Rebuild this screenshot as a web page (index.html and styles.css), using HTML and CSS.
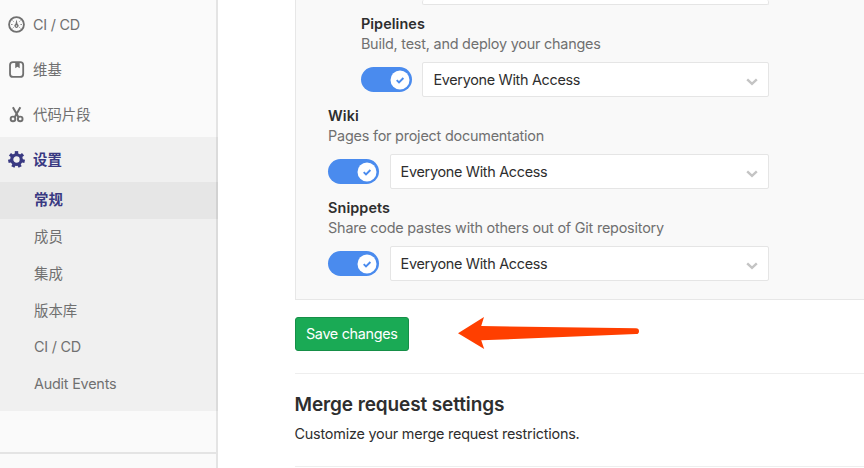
FILE: index.html
```html
<!DOCTYPE html>
<html lang="zh-CN">
<head>
<meta charset="utf-8">
<title>Project settings</title>
<link rel="stylesheet" href="styles.css">
</head>
<body>
<div class="page">
  <nav class="sidebar">
    <a class="nav-item">
      <svg class="nav-icon" viewBox="0 0 16 16"><circle cx="8" cy="8" r="7" fill="none" stroke="currentColor" stroke-width="1.7"/><path d="M8 3.4 L9 7.6 A1.9 1.9 0 1 1 7 7.6Z" fill="currentColor"/><circle cx="8" cy="9.3" r=".7" fill="#fafafa"/><path d="M3 8h1.2M11.8 8H13M4.4 4.4l.8.8M11.6 4.4l-.8.8M4.4 11.6l.8-.8M11.6 11.6l-.8-.8" stroke="currentColor" stroke-width=".9"/></svg>
      <span class="latin">CI / CD</span>
    </a>
    <a class="nav-item">
      <svg class="nav-icon" viewBox="0 0 16 16"><rect x="1.9" y="1" width="12.4" height="14" rx="2.8" fill="none" stroke="currentColor" stroke-width="1.7"/><path d="M6.8 1h4.2v5.8L8.9 5.4 6.8 6.8z" fill="currentColor"/></svg>
      <span>维基</span>
    </a>
    <a class="nav-item">
      <svg class="nav-icon" viewBox="0 0 16 16"><path d="M4.6 1.2 9.9 10.6M11.6 1.2 6.3 10.6" fill="none" stroke="currentColor" stroke-width="1.9"/><circle cx="4.7" cy="12.2" r="2.2" fill="none" stroke="currentColor" stroke-width="1.8"/><circle cx="11.5" cy="12.2" r="2.2" fill="none" stroke="currentColor" stroke-width="1.8"/></svg>
      <span>代码片段</span>
    </a>
    <div class="nav-group">
      <a class="nav-item current">
        <svg class="nav-icon" viewBox="0 0 16 16"><circle cx="8" cy="8" r="4.5" fill="none" stroke="currentColor" stroke-width="3"/><g stroke="currentColor" stroke-width="3.2"><path id="tooth" d="M8 .1v3"/><use href="#tooth" transform="rotate(51.43 8 8)"/><use href="#tooth" transform="rotate(102.86 8 8)"/><use href="#tooth" transform="rotate(154.29 8 8)"/><use href="#tooth" transform="rotate(205.71 8 8)"/><use href="#tooth" transform="rotate(257.14 8 8)"/><use href="#tooth" transform="rotate(308.57 8 8)"/></g></svg>
        <span>设置</span>
      </a>
      <a class="sub-item active">常规</a>
      <a class="sub-item">成员</a>
      <a class="sub-item">集成</a>
      <a class="sub-item">版本库</a>
      <a class="sub-item latin">CI / CD</a>
      <a class="sub-item latin">Audit Events</a>
    </div>
    <div class="collapse"></div>
  </nav>
  <main class="content">
    <section class="panel">
      <div class="setting nested first"><div class="select"></div></div>
      <div class="setting nested">
        <div class="title">Pipelines</div>
        <div class="desc">Build, test, and deploy your changes</div>
        <div class="control">
          <span class="toggle"><svg viewBox="0 0 20 20"><circle cx="10" cy="10" r="9.5" fill="#fff"/><path d="M6.7 10.2 9 12.5 13.4 8" fill="none" stroke="#4a8bee" stroke-width="1.9"/></svg></span>
          <div class="select"><span>Everyone With Access</span><svg class="chevron" viewBox="0 0 12 8"><path d="M1.2 1.3 6 5.9 10.8 1.3" fill="none" stroke="currentColor" stroke-width="2.4"/></svg></div>
        </div>
      </div>
      <div class="setting">
        <div class="title">Wiki</div>
        <div class="desc">Pages for project documentation</div>
        <div class="control">
          <span class="toggle"><svg viewBox="0 0 20 20"><circle cx="10" cy="10" r="9.5" fill="#fff"/><path d="M6.7 10.2 9 12.5 13.4 8" fill="none" stroke="#4a8bee" stroke-width="1.9"/></svg></span>
          <div class="select"><span>Everyone With Access</span><svg class="chevron" viewBox="0 0 12 8"><path d="M1.2 1.3 6 5.9 10.8 1.3" fill="none" stroke="currentColor" stroke-width="2.4"/></svg></div>
        </div>
      </div>
      <div class="setting">
        <div class="title">Snippets</div>
        <div class="desc">Share code pastes with others out of Git repository</div>
        <div class="control">
          <span class="toggle"><svg viewBox="0 0 20 20"><circle cx="10" cy="10" r="9.5" fill="#fff"/><path d="M6.7 10.2 9 12.5 13.4 8" fill="none" stroke="#4a8bee" stroke-width="1.9"/></svg></span>
          <div class="select"><span>Everyone With Access</span><svg class="chevron" viewBox="0 0 12 8"><path d="M1.2 1.3 6 5.9 10.8 1.3" fill="none" stroke="currentColor" stroke-width="2.4"/></svg></div>
        </div>
      </div>
    </section>
    <div class="actions">
      <button class="save">Save changes</button>
      <svg class="arrow" viewBox="0 0 182 34"><path d="M0 16.3 26 0 23.2 9 178 11.3Q181 11.3 181 14.2T178 17L23.2 23.3 26.2 32Z" fill="#ff3f00"/></svg>
    </div>
    <section class="merge">
      <h4>Merge request settings</h4>
      <p>Customize your merge request restrictions.</p>
    </section>
  </main>
</div>
</body>
</html>
```

FILE: styles.css
```css
* { box-sizing: border-box; }

body {
  margin: 0;
  background: #fff;
  color: #2e2e2e;
  font: 14.4px/20px Inter, "Noto Sans CJK SC", sans-serif;
}

.page {
  display: flex;
  height: 468px;
  overflow: hidden;
}

/* Sidebar */
.sidebar {
  display: flex;
  flex-direction: column;
  flex: none;
  width: 218px;
  padding-top: 2px;
  background: #fafafa;
  box-shadow: inset -2px 0 0 #e4e4e4;
  color: #707070;
}

.nav-item {
  display: flex;
  align-items: center;
  gap: 8px;
  height: 45px;
  padding-left: 8px;
}

.nav-icon {
  flex: none;
  width: 17px;
  height: 17px;
}

.nav-group {
  height: 274px;
  background: rgba(0, 0, 0, 0.04);
}

.sub-item {
  display: flex;
  align-items: center;
  height: 36.7px;
  padding: 0.3px 0 0 34px;
}

.latin { letter-spacing: -0.22px; }

.current,
.active {
  color: #393982;
  font-weight: 600;
}

.active { background: rgba(0, 0, 0, 0.04); }

.collapse {
  flex: 1;
  margin: 41px 2px 0 0;
  border-top: 2px solid #e4e4e4;
}

/* Content */
.content {
  flex: 1;
  min-width: 0;
  padding-left: 76.5px;
  letter-spacing: -0.21px;
}

.panel {
  height: 300px;
  padding-left: 32.6px;
  border: solid #e7e7e7;
  border-width: 0 0 1px 1px;
  background: #f9f9f9;
}

.setting {
  width: 441.4px;
  height: 92px;
}

.nested { padding-left: 32.8px; }

.first {
  height: 14px;
  padding-left: 94px;
}

.first .select {
  height: 5px;
  border-top: 0;
}

.title {
  font-weight: 600;
  letter-spacing: 0.08px;
  white-space: nowrap;
}

.desc {
  color: #707070;
  white-space: nowrap;
}

.control {
  display: flex;
  align-items: center;
  gap: 10.5px;
  margin-top: 8px;
}

.toggle {
  display: flex;
  align-items: center;
  justify-content: flex-end;
  flex: none;
  width: 51px;
  height: 25px;
  padding-right: 2px;
  border-radius: 13px;
  background: #4a8bee;
}

.toggle svg {
  width: 20px;
  height: 20px;
}

.select {
  display: flex;
  align-items: center;
  justify-content: space-between;
  flex: 1;
  height: 35px;
  padding: 0 10px;
  border: 1px solid #e5e5e5;
  border-radius: 2px;
  background: #fff;
  letter-spacing: -0.3px;
}

.chevron {
  width: 12px;
  height: 8px;
  margin-top: 4px;
  color: #c4c4c4;
}

.actions {
  display: flex;
  align-items: flex-start;
  height: 73px;
  padding-top: 17px;
}

.save {
  width: 114.5px;
  height: 34px;
  padding: 0;
  border: 1px solid #168f48;
  border-radius: 3px;
  background: #1aaa55;
  color: #fff;
  font: inherit;
  letter-spacing: -0.32px;
  white-space: nowrap;
}

.arrow {
  width: 182px;
  height: 34px;
  margin-left: 49px;
}

.merge {
  height: 94px;
  border: solid #eee;
  border-width: 1px 0;
}

h4 {
  margin: 20px 0 0;
  font-size: 19px;
  font-weight: 600;
  letter-spacing: -0.11px;
  line-height: 22px;
}

p { margin: 8px 0 0; }
```
